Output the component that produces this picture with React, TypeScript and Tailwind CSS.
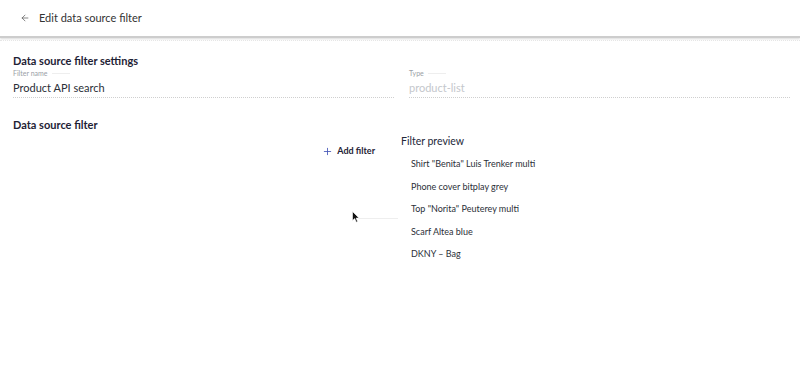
import { ArrowLeft, Plus } from 'lucide-react';

const previewItems = [
  'Shirt "Benita" Luis Trenker multi',
  'Phone cover bitplay grey',
  'Top "Norita" Peuterey multi',
  'Scarf Altea blue',
  'DKNY – Bag',
];

function Field({ label, value, muted }: { label: string; value: string; muted?: boolean }) {
  return (
    <div className="flex-1">
      <div className="flex items-center gap-1 text-[7px] leading-[10px] text-[#9aa0a6]">
        {label}
        <span className="block h-px w-[18px] bg-[#eeeeee]" />
      </div>
      <div
        className={`mt-[3px] pb-[2px] text-[11px] leading-[14px] border-b border-dotted border-[#cfcfcf] ${
          muted ? 'text-[#c4c7cc]' : 'text-[#2b2f38]'
        }`}
      >
        {value}
      </div>
    </div>
  );
}

export default function App() {
  return (
    <div
      className="relative w-[800px] h-[376px] bg-white text-[#23283a] overflow-hidden"
      style={{ fontFamily: 'Lato, "Open Sans", sans-serif' }}
    >
      <header className="h-[38px] flex items-center gap-[9px] pl-[20px] border-b-2 border-[#cdcdcd] shadow-[0_1px_2px_rgba(0,0,0,0.15)]">
        <ArrowLeft size={10} strokeWidth={1.7} className="text-[#555]" />
        <span className="text-[11px] text-[#333]">Edit data source filter</span>
      </header>
      <div className="h-[3px] border-b border-dotted border-[#e6e6e6]" />

      <main className="pl-[13px] pr-[10px] pt-[13px]">
        <h2 className="text-[11px] leading-[14px] font-bold text-[#1e2235]">Data source filter settings</h2>
        <div className="flex gap-[14px]">
          <Field label="Filter name" value="Product API search" />
          <div className="flex-1 pl-[1px]">
            <Field label="Type" value="product-list" muted />
          </div>
        </div>

        <h2 className="mt-[20px] text-[11px] leading-[14px] font-bold text-[#1e2235]">Data source filter</h2>

        <div className="flex">
          <div className="w-[362px] flex justify-end pt-[9px]">
            <button className="flex items-center gap-[4px] h-[20px] text-[9px] font-bold text-[#1e2235]">
              <Plus size={11} strokeWidth={1.8} className="text-[#3f51b5]" />
              Add filter
            </button>
          </div>
          <div className="ml-[26px]">
            <div className="text-[10.5px] leading-[14px] pt-[2px] text-[#23283a]">Filter preview</div>
            <ul className="mt-[10px] pl-[10px] flex flex-col gap-[10px]">
              {previewItems.map((item) => (
                <li key={item} className="text-[9px] leading-[12.5px] text-[#2b2f38]">
                  {item}
                </li>
              ))}
            </ul>
          </div>
        </div>
      </main>

      <div className="absolute left-[358px] top-[218px] w-[40px] h-px bg-[#eeeeee]" />
      <svg className="absolute left-[352px] top-[211px]" width="8" height="12" viewBox="0 0 8 12">
        <path d="M0.5 0.5 L0.5 9.5 L2.7 7.6 L4.3 11.2 L5.6 10.6 L4.1 7.1 L7 7 Z" fill="#111" stroke="#fff" strokeWidth="0.6" />
      </svg>
    </div>
  );
}
